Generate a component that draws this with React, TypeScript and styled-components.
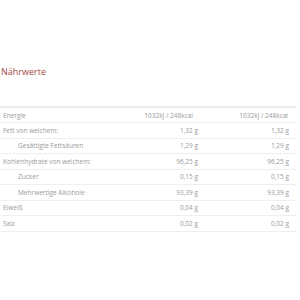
import { createGlobalStyle, styled } from 'styled-components';

const GlobalStyle = createGlobalStyle`
  html, body {
    margin: 0;
    padding: 0;
    background: #ffffff;
  }
`;

const Page = styled.section`
  width: 300px;
  height: 300px;
  padding-top: 65px;
  box-sizing: border-box;
  font-family: 'Open Sans', 'DejaVu Sans', sans-serif;
`;

const Title = styled.h2`
  margin: 0 0 27px 1px;
  font-size: 9px;
  font-weight: 400;
  line-height: 14px;
  color: #a24a3e;
`;

const Table = styled.table`
  width: 296px;
  border-collapse: collapse;
  border-top: 2px solid #ececec;
  font-size: 6.5px;
  color: #9a9a9a;
`;

const Row = styled.tr`
  height: 15.5px;
  border-bottom: 1px solid #efefef;
`;

const Label = styled.td<{ $sub?: boolean }>`
  padding: 0 0 0 ${(p) => (p.$sub ? '18px' : '3px')};
  text-align: left;
  white-space: nowrap;
`;

const Value = styled.td<{ $pad: number }>`
  width: 90px;
  padding: 0 ${(p) => p.$pad}px 0 0;
  text-align: right;
  white-space: nowrap;
`;

const rows = [
  { label: 'Energie', value: '1032kJ / 248kcal', wide: true },
  { label: 'Fett von welchem:', value: '1,32 g' },
  { label: 'Gesättigte Fettsäuren', value: '1,29 g', sub: true },
  { label: 'Kohlenhydrate von welchem:', value: '96,25 g' },
  { label: 'Zucker', value: '0,15 g', sub: true },
  { label: 'Mehrwertige Alkohole', value: '93,39 g', sub: true },
  { label: 'Eiweiß', value: '0,04 g' },
  { label: 'Salz', value: '0,02 g' },
];

const App = () => (
  <Page>
    <GlobalStyle />
    <Title>Nährwerte</Title>
    <Table>
      <tbody>
        {rows.map((r) => (
          <Row key={r.label}>
            <Label $sub={r.sub}>{r.label}</Label>
            <Value $pad={r.wide ? 5 : 0}>{r.value}</Value>
            <Value $pad={r.wide ? 8 : 7}>{r.value}</Value>
          </Row>
        ))}
      </tbody>
    </Table>
  </Page>
);

export default App;
